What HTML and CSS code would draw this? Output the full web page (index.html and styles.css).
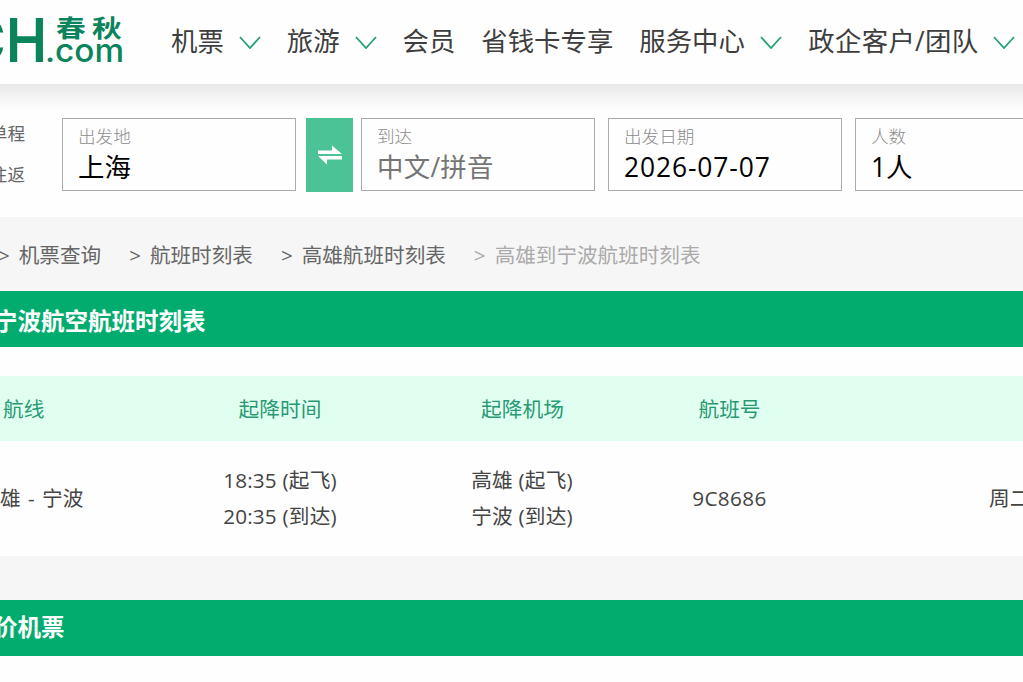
FILE: index.html
```html
<!DOCTYPE html>
<html lang="zh-CN">
<head>
<meta charset="utf-8">
<title>春秋航空航班时刻表</title>
<link rel="stylesheet" href="styles.css">
</head>
<body>
<header class="header">
  <svg class="logo" width="124" height="84" viewBox="0 0 124 84">
    <text class="logo-letter" x="-38" y="61.500" textLength="44" lengthAdjust="spacingAndGlyphs">C</text>
    <text class="logo-letter" x="6" y="61.500" textLength="41" lengthAdjust="spacingAndGlyphs">H</text>
    <text class="logo-cn" transform="translate(56 36.500) scale(1.060 .86)" x="0" y="0">春</text>
    <text class="logo-cn" transform="translate(92 36.500) scale(1.060 .86)" x="0" y="0">秋</text>
    <text class="logo-com" x="45" y="61.500" textLength="79" lengthAdjust="spacingAndGlyphs">.com</text>
  </svg>
  <nav class="nav">
    <a class="nav-item">机票<svg class="chevron" viewBox="0 0 22 13"><path d="M1 1l10 11L21 1"/></svg></a>
    <a class="nav-item">旅游<svg class="chevron" viewBox="0 0 22 13"><path d="M1 1l10 11L21 1"/></svg></a>
    <a class="nav-item">会员</a>
    <a class="nav-item">省钱卡专享</a>
    <a class="nav-item">服务中心<svg class="chevron" viewBox="0 0 22 13"><path d="M1 1l10 11L21 1"/></svg></a>
    <a class="nav-item wide">政企客户/团队<svg class="chevron" viewBox="0 0 22 13"><path d="M1 1l10 11L21 1"/></svg></a>
  </nav>
</header>
<section class="search">
  <div class="trip"><span>单程</span><span>往返</span></div>
  <div class="field"><span class="label">出发地</span><span class="value">上海</span></div>
  <button class="swap"><svg width="26" height="20" viewBox="0 0 26 20"><path d="M1 5.500h14V0.500L25 9H1zM25 11v3.500H10V19.500L1 11z"/></svg></button>
  <div class="field"><span class="label">到达</span><span class="value placeholder">中文/拼音</span></div>
  <div class="field date"><span class="label">出发日期</span><span class="value digits">2026-07-07</span></div>
  <div class="field"><span class="label">人数</span><span class="value">1人</span></div>
</section>
<nav class="crumbs">
  <a class="crumb">机票查询</a><a class="crumb">航班时刻表</a><a class="crumb">高雄航班时刻表</a><span class="crumb current">高雄到宁波航班时刻表</span>
</nav>
<main>
  <h2 class="band"><span class="band-text">宁波航空航班时刻表</span></h2>
  <section class="timetable">
    <div class="row head"><span>航线</span><span>起降时间</span><span>起降机场</span><span>航班号</span><span></span></div>
    <div class="row body">
      <span class="route">雄 - 宁波</span>
      <span class="times">18:35 (起飞)<br>20:35 (到达)</span>
      <span class="airports">高雄 (起飞)<br>宁波 (到达)</span>
      <span class="flight">9C8686</span>
      <span class="days">周二</span>
    </div>
  </section>
  <div class="divider"></div>
  <h2 class="band second"><span class="band-text">价机票</span></h2>
</main>
</body>
</html>
```
FILE: styles.css
```css
* { box-sizing: border-box; }
html { overflow: hidden; }
body {
  margin: 0;
  width: 1023px;
  height: 682px;
  overflow: hidden;
  background: #fefefe;
  color: #444;
  font-family: "Open Sans", "Noto Sans CJK SC", sans-serif;
}
.header {
  display: flex;
  height: 84px;
  background: #fefefe;
}
.logo { flex: none; overflow: hidden; fill: #0b845b; }
.logo-letter { font: 600 61px Inter, sans-serif; }
.logo-cn { font: 700 28px "Noto Sans CJK SC", sans-serif; }
.logo-com { font: 500 32px Inter, sans-serif; }
.nav {
  display: flex;
  flex: none;
  gap: 26px;
  margin-left: 47px;
  height: 82px;
  align-items: center;
}
.nav-item {
  display: flex;
  flex: none;
  align-items: center;
  gap: 15px;
  color: #3e3e3e;
  font-size: 26.4px;
  line-height: 40px;
  white-space: nowrap;
}
.wide { letter-spacing: 0.3px; margin-left: 0.5px; }
.chevron {
  width: 22px;
  height: 13px;
  margin-top: 3px;
  fill: none;
  stroke: #24a078;
  stroke-width: 1.8;
}
.search {
  display: flex;
  height: 133px;
  padding-top: 34px;
  background: linear-gradient(#e8e8e8, #f3f3f3 12px, #fefefe 27px);
}
.trip {
  display: flex;
  flex: none;
  flex-direction: column;
  align-items: flex-end;
  width: 25px;
  margin-right: 37px;
  color: #666;
  font-size: 17.6px;
  line-height: 41px;
  margin-top: -5px;
  white-space: nowrap;
}
.field {
  display: flex;
  flex: none;
  flex-direction: column;
  width: 234px;
  height: 73px;
  padding: 4px 15px;
  border: 1px solid #aaa;
  margin-right: 13px;
  background: #fefefe;
}
.label {
  color: #8c8c8c;
  font-size: 17.6px;
  font-weight: 300;
  line-height: 26px;
}
.value {
  color: #000;
  font-size: 26.4px;
  line-height: 37px;
}
.placeholder { color: #757575; letter-spacing: 0.3px; }
.digits { letter-spacing: 0.9px; }
.swap {
  display: grid;
  flex: none;
  place-items: center;
  width: 47px;
  height: 74px;
  margin: 0 8px 0 -3px;
  padding: 0;
  border: 0;
  background: #4cc397;
}
.swap svg { fill: #fff; }
.crumbs {
  display: flex;
  height: 74px;
  padding-top: 18px;
  background: #f6f6f6;
  color: #666;
  font-size: 20.6px;
  line-height: 40px;
  white-space: nowrap;
}
.crumb { flex: none; margin-right: 28px; }
.crumb::before { content: ">"; margin-right: 9px; }
.crumb:first-child { margin-left: -2px; }
.current { color: #aaa; }
.band {
  display: flex;
  align-items: center;
  height: 56px;
  margin: 0;
  padding-top: 3px;
  background: #02ac6f;
  color: #fff;
  font-size: 23.5px;
  line-height: 40px;
}
.band-text { margin-left: -6px; white-space: nowrap; }
.timetable { padding-top: 29px; }
.row {
  display: grid;
  grid-template-columns: 154px 252px 233px 181px 203px;
  align-items: center;
  font-size: 20.7px;
  line-height: 36px;
  white-space: nowrap;
}
.head {
  height: 65px;
  background: #e1fff0;
  color: #279a73;
  text-align: center;
}
.head span:first-child { text-align: left; padding-left: 3px; }
.body { height: 115px; padding-bottom: 2px; text-align: center; }
.route { text-align: left; word-spacing: 2px; }
.times, .airports { letter-spacing: 0.2px; }
.airports { margin-left: -1px; }
.flight { letter-spacing: 0.4px; }
.days { text-align: left; padding-left: 169px; }
.divider { height: 44px; background: #f6f6f6; }
.second { padding-top: 0; }
.second .band-text { margin-top: -2px; }
```
